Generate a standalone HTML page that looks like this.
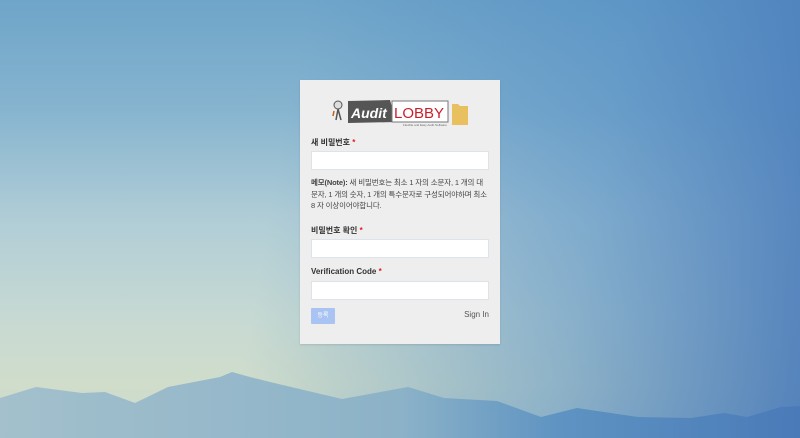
<!DOCTYPE html>
<html><head><meta charset="utf-8"><style>
html,body{margin:0;padding:0;width:800px;height:438px;overflow:hidden}
body{position:relative;font-family:"Liberation Sans","Noto Sans CJK KR",sans-serif;
background:linear-gradient(180deg,#6fa5c9 0%,#86b4cf 25%,#b0cdd6 50%,#c6d9d3 72%,#d0ddcb 88%,#c8d8cc 100%);}
.ov{position:absolute;inset:0;background:linear-gradient(100deg,rgba(80,140,195,0) 35%,rgba(75,135,195,0.5) 72%,rgba(70,120,185,0.9) 100%)}
svg.m{position:absolute;left:0;top:0}
.card{position:absolute;left:300px;top:80px;width:200px;height:264px;background:#eeeeee;box-shadow:0 1px 2px rgba(0,0,0,.12)}
.lbl{position:absolute;left:11px;font-size:8px;font-weight:bold;color:#333}
.lbl b{color:#e02020}
.inp{position:absolute;left:11px;width:178px;height:19px;background:#fff;border:1px solid #dde3ea;box-sizing:border-box}
.note{position:absolute;left:11px;top:97px;width:182px;font-size:7.5px;line-height:11.5px;color:#444;letter-spacing:-0.15px;white-space:nowrap}
.btn{position:absolute;left:11px;top:228px;width:24px;height:16px;background:#a9c4f2;color:#fff;font-size:6px;text-align:center;line-height:16px;border-radius:1px}
.sign{position:absolute;right:11px;top:230px;font-size:8px;color:#555}
</style></head><body>
<div class="ov"></div>
<svg class="m" width="800" height="438"><defs><linearGradient id="g" x1="0" x2="1"><stop offset="0" stop-color="#a3c0cc"/><stop offset="0.5" stop-color="#8cb2c8"/><stop offset="0.7" stop-color="#5e93c2"/><stop offset="1" stop-color="#4a7ab8"/></linearGradient></defs>
<polygon fill="url(#g)" points="0,398 36,387 82,393 105,392 135,403 168,387 220,377 232,372 250,377 270,382 342,399 408,387 444,398 497,401 541,417 577,408 638,417 691,418 724,413 747,417 781,407 800,406 800,438 0,438"/></svg>
<div class="card">
<svg style="position:absolute;left:30px;top:18px" width="140" height="30">
<circle cx="8" cy="7" r="4" fill="#ddd" stroke="#555" stroke-width="1"/><path d="M8 11 L6 22 M8 11 L11 22" stroke="#555" stroke-width="1.5"/><path d="M4 13 L3 18" stroke="#c06020" stroke-width="1.5"/>
<polygon points="18,3 60,2 66,24 18,25" fill="#555"/>
<text x="21" y="20" font-family="Liberation Sans" font-weight="bold" font-style="italic" font-size="14" fill="#fff">Audit</text>
<rect x="62" y="3" width="56" height="21" fill="#fff" stroke="#777"/>
<text x="64" y="20" font-family="Liberation Sans" font-size="15" fill="#c8202a">LOBBY</text>
<text x="73" y="28" font-family="Liberation Sans" font-size="3" fill="#666">Flexible and Easy Audit Software</text>
<path d="M122 6 L128 6 L130 8 L138 8 L138 27 L122 27Z" fill="#e8c060"/>
</svg>
<div class="lbl" style="top:57px">새 비밀번호 <b>*</b></div>
<div class="inp" style="top:71px"></div>
<div class="note"><b>메모(Note):</b> 새 비밀번호는 최소 1 자의 소문자, 1 개의 대<br>문자, 1 개의 숫자, 1 개의 특수문자로 구성되어야하며 최소<br>8 자 이상이어야합니다.</div>
<div class="lbl" style="top:145px">비밀번호 확인 <b>*</b></div>
<div class="inp" style="top:159px"></div>
<div class="lbl" style="top:187px">Verification Code <b>*</b></div>
<div class="inp" style="top:201px"></div>
<div class="btn">등록</div>
<div class="sign">Sign In</div>
</div>
</body></html>
